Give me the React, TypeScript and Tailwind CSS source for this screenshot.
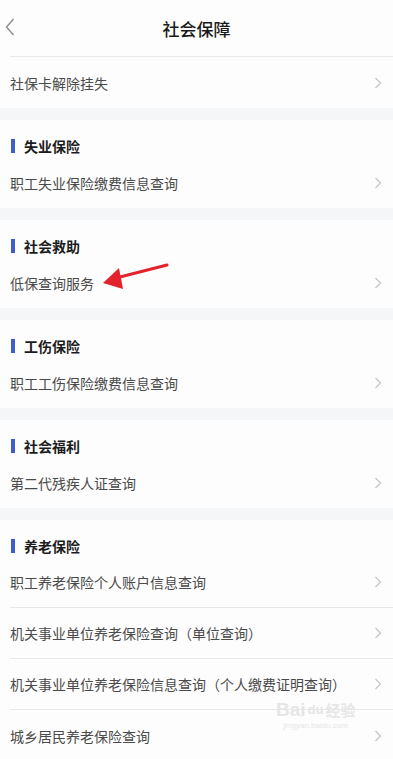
const SECTIONS = [
  { title: '失业保险', items: ['职工失业保险缴费信息查询'] },
  { title: '社会救助', items: ['低保查询服务'] },
  { title: '工伤保险', items: ['职工工伤保险缴费信息查询'] },
  { title: '社会福利', items: ['第二代残疾人证查询'] },
  {
    title: '养老保险',
    items: [
      '职工养老保险个人账户信息查询',
      '机关事业单位养老保险查询（单位查询）',
      '机关事业单位养老保险信息查询（个人缴费证明查询）',
      '城乡居民养老保险查询'
    ]
  }
] as const

const FONT = "font-['Noto_Sans_CJK_SC','Noto_Sans',sans-serif]"

function Chevron() {
  return (
    <svg width="8" height="12" viewBox="0 0 8 12" className="shrink-0">
      <polyline points="1.5,1 6.5,6 1.5,11" fill="none" stroke="#c4c4c4" strokeWidth="1.2" />
    </svg>
  )
}

function Row({ label, divider }: { label: string; divider?: boolean }) {
  return (
    <div className={`ml-[10px] flex h-[51px] items-center justify-between pr-[11px] ${divider ? 'border-b border-[#e8e8ea]' : ''}`}>
      <span className="text-[14px] leading-none text-[#4a4a4a]">{label}</span>
      <Chevron />
    </div>
  )
}

export default function App() {
  return (
    <div className={`relative h-[759px] w-[393px] overflow-hidden bg-[#f5f6f8] ${FONT}`}>
      {/* Header */}
      <div className="bg-[#fdfdfd]">
        <div className="relative flex h-[56px] items-center justify-center">
          <svg width="10" height="18" viewBox="0 0 10 18" className="absolute left-[5px] top-[18px]">
            <polyline points="8.5,1 1.5,9 8.5,17" fill="none" stroke="#8c8c8c" strokeWidth="1.4" />
          </svg>
          <h1 className="text-[17px] font-medium leading-none text-[#1a1a1a]">社会保障</h1>
        </div>
        <div className="ml-[10px] h-px bg-[#e9e9eb]" />
        <Row label="社保卡解除挂失" />
      </div>

      {SECTIONS.map((section) => (
        <section key={section.title} className="mt-[12px] bg-[#fdfdfd]">
          <div className="flex h-[37px] items-center gap-[9px] pl-[11px] pt-[15px]">
            <span className="h-[14px] w-[4px] bg-[#3e5fc9]" />
            <h2 className="text-[14px] font-bold leading-none text-[#1c1c1c]">{section.title}</h2>
          </div>
          {section.items.map((item, i) => (
            <Row key={item} label={item} divider={i < section.items.length - 1} />
          ))}
        </section>
      ))}

      {/* red annotation arrow */}
      <svg width="393" height="759" className="pointer-events-none absolute left-0 top-0">
        <line x1="167" y1="265" x2="116" y2="278" stroke="#e3232b" strokeWidth="3" strokeLinecap="round" />
        <polygon points="103,283 119,268 123,289" fill="#e3232b" />
      </svg>

      {/* watermark */}
      <div className="pointer-events-none absolute left-[276px] top-[700px] flex flex-col items-center text-[#e6e6e6]">
        <div className="flex items-center gap-[2px] font-['Liberation_Sans',sans-serif] text-[19px] font-bold leading-none">
          <span>Bai</span>
          <span className="text-[13px]">du</span>
          <span className={`text-[15px] ${FONT}`}>经验</span>
        </div>
        <span className="mt-[3px] font-['Liberation_Sans',sans-serif] text-[8px] leading-none">jingyan.baidu.com</span>
      </div>
    </div>
  )
}
